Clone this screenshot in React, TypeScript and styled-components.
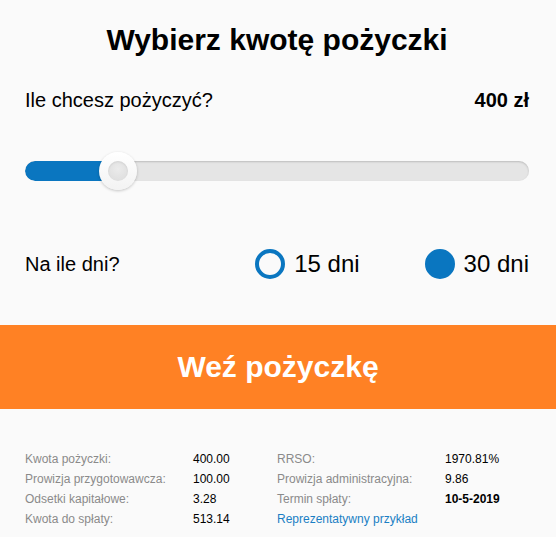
import React from "react";
import styled, { createGlobalStyle } from "styled-components";

const GlobalStyle = createGlobalStyle`
  html, body {
    margin: 0;
    padding: 0;
    background: #fafafa;
  }
  body {
    font-family: "Liberation Sans", Arial, sans-serif;
    color: #000;
  }
`;

const Page = styled.div`
  width: 556px;
  min-height: 537px;
  background: #fafafa;
`;

const Content = styled.div`
  padding: 0 27px 0 25px;
`;

const Title = styled.h1`
  margin: 0;
  padding-top: 22px;
  font-size: 30px;
  line-height: 36px;
  font-weight: 700;
  text-align: center;
`;

const AmountRow = styled.div`
  margin-top: 30px;
  display: flex;
  justify-content: space-between;
  align-items: center;
  font-size: 20px;
  line-height: 24px;
`;

const AmountValue = styled.span`
  font-weight: 700;
  font-size: 20px;
`;

const SliderWrap = styled.div`
  position: relative;
  margin-top: 40px;
  height: 38px;
  display: flex;
  align-items: center;
`;

const Track = styled.div`
  position: relative;
  width: 100%;
  height: 20px;
  border-radius: 10px;
  background: #e5e5e5;
  box-shadow: inset 0 1px 2px rgba(0, 0, 0, 0.18);
  overflow: hidden;
`;

const Fill = styled.div`
  height: 100%;
  background: #0a76c0;
  border-radius: 10px 0 0 10px;
`;

const Thumb = styled.div`
  position: absolute;
  top: 0;
  width: 38px;
  height: 38px;
  margin-left: -19px;
  border-radius: 50%;
  background: linear-gradient(#ffffff, #f3f3f3);
  box-shadow: 0 1px 3px rgba(0, 0, 0, 0.22);
  display: flex;
  align-items: center;
  justify-content: center;
`;

const ThumbDot = styled.div`
  width: 20px;
  height: 20px;
  border-radius: 50%;
  background: radial-gradient(circle at 50% 40%, #ebebeb, #dbdbdb);
  box-shadow: inset 0 1px 2px rgba(0, 0, 0, 0.08);
`;

const RadioRow = styled.div`
  margin-top: 59px;
  height: 30px;
  display: flex;
  align-items: center;
  justify-content: space-between;
  font-size: 20px;
`;

const RadioGroup = styled.div`
  display: flex;
  align-items: center;
  gap: 65px;
`;

const RadioOption = styled.label`
  display: flex;
  align-items: center;
  gap: 9px;
  font-size: 24px;
  cursor: pointer;
`;

const RadioCircle = styled.span<{ $checked: boolean }>`
  box-sizing: border-box;
  width: 30px;
  height: 30px;
  border-radius: 50%;
  border: 4px solid #0a76c0;
  background: ${(p) => (p.$checked ? "#0a76c0" : "transparent")};
`;

const CtaButton = styled.button`
  display: block;
  width: 100%;
  margin-top: 46px;
  height: 84px;
  padding: 0;
  border: none;
  background: #ff8124;
  color: #fff;
  font-family: "Liberation Sans", Arial, sans-serif;
  font-size: 30px;
  font-weight: 700;
  cursor: pointer;
`;

const Details = styled.div`
  padding: 40px 25px 0 25px;
  display: grid;
  grid-template-columns: 168px 84px 168px 1fr;
  grid-auto-rows: 20px;
  font-size: 12px;
  align-items: center;
`;

const Label = styled.span`
  color: #8a8a8a;
`;

const Value = styled.span<{ $bold?: boolean }>`
  color: #000;
  font-weight: ${(p) => (p.$bold ? 700 : 400)};
`;

const Link = styled.a`
  color: #1a7fc4;
  text-decoration: none;
  grid-column: span 2;
`;

const value = 400;
const min = 100;
const max = 1725;

export default function App() {
  const pct = ((value - min) / (max - min)) * 100;
  return (
    <Page>
      <GlobalStyle />
      <Content>
        <Title>Wybierz kwotę pożyczki</Title>
        <AmountRow>
          <span>Ile chcesz pożyczyć?</span>
          <AmountValue>400 zł</AmountValue>
        </AmountRow>
        <SliderWrap>
          <Track>
            <Fill style={{ width: `${pct}%` }} />
          </Track>
          <Thumb style={{ left: `${pct}%` }}>
            <ThumbDot />
          </Thumb>
        </SliderWrap>
        <RadioRow>
          <span>Na ile dni?</span>
          <RadioGroup>
            <RadioOption>
              <RadioCircle $checked={false} />
              15 dni
            </RadioOption>
            <RadioOption>
              <RadioCircle $checked={true} />
              30 dni
            </RadioOption>
          </RadioGroup>
        </RadioRow>
      </Content>
      <CtaButton>Weź pożyczkę</CtaButton>
      <Details>
        <Label>Kwota pożyczki:</Label>
        <Value>400.00</Value>
        <Label>RRSO:</Label>
        <Value>1970.81%</Value>
        <Label>Prowizja przygotowawcza:</Label>
        <Value>100.00</Value>
        <Label>Prowizja administracyjna:</Label>
        <Value>9.86</Value>
        <Label>Odsetki kapitałowe:</Label>
        <Value>3.28</Value>
        <Label>Termin spłaty:</Label>
        <Value $bold>10-5-2019</Value>
        <Label>Kwota do spłaty:</Label>
        <Value>513.14</Value>
        <Link href="#">Reprezentatywny przykład</Link>
      </Details>
    </Page>
  );
}
